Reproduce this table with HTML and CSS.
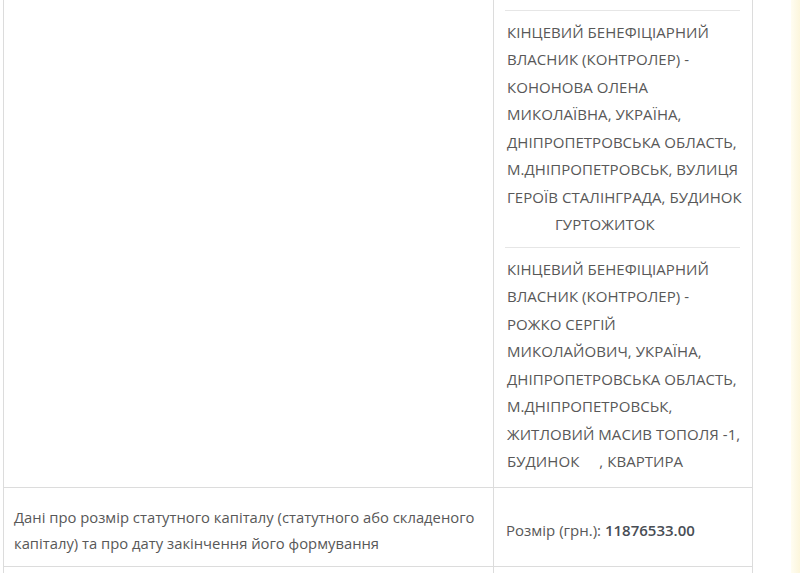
FILE: index.html
```html
<!DOCTYPE html>
<html lang="uk">
<head>
<meta charset="utf-8">
<title>Дані</title>
<link rel="stylesheet" href="styles.css">
</head>
<body>
<div class="page">
  <div class="grid">
    <div class="cell cell-label cell-empty"></div>
    <div class="cell cell-value cell-list">
      <div class="entry">КІНЦЕВИЙ БЕНЕФІЦІАРНИЙ<br>ВЛАСНИК (КОНТРОЛЕР) -<br>КОНОНОВА ОЛЕНА<br>МИКОЛАЇВНА, УКРАЇНА,<br>ДНІПРОПЕТРОВСЬКА ОБЛАСТЬ,<br>М.ДНІПРОПЕТРОВСЬК, ВУЛИЦЯ<br>ГЕРОЇВ СТАЛІНГРАДА, БУДИНОК<br><span class="indent">ГУРТОЖИТОК</span></div>
      <div class="entry">КІНЦЕВИЙ БЕНЕФІЦІАРНИЙ<br>ВЛАСНИК (КОНТРОЛЕР) -<br>РОЖКО СЕРГІЙ<br>МИКОЛАЙОВИЧ, УКРАЇНА,<br>ДНІПРОПЕТРОВСЬКА ОБЛАСТЬ,<br>М.ДНІПРОПЕТРОВСЬК,<br>ЖИТЛОВИЙ МАСИВ ТОПОЛЯ -1,<br>БУДИНОК<span class="gap"></span>, КВАРТИРА</div>
    </div>
    <div class="cell cell-label row-capital">Дані про розмір статутного капіталу (статутного або складеного<br>капіталу) та про дату закінчення його формування</div>
    <div class="cell cell-value row-capital capital">Розмір (грн.): <span class="amount">11876533.00</span></div>
    <div class="cell cell-label row-next"></div>
    <div class="cell cell-value row-next"></div>
  </div>
  <div class="strip"></div>
</div>
</body>
</html>
```

FILE: styles.css
```css
html, body {
  margin: 0;
  padding: 0;
  background: #ffffff;
}

body {
  font-family: "Open Sans", "Noto Sans", sans-serif;
  font-size: 14.8px;
  color: #585858;
}

.page {
  display: flex;
  height: 573px;
  overflow: hidden;
}

.grid {
  margin-left: 3px;
  display: grid;
  grid-template-columns: 490px 259px;
  grid-auto-rows: auto;
  border-left: 1px solid #dcdcdc;
  align-self: flex-start;
}

.cell {
  border-right: 1px solid #dcdcdc;
  border-bottom: 1px solid #dcdcdc;
}

.cell-list {
  padding: 10px 12px 3px 11px;
}

.entry {
  border-top: 1px solid #e6e6e6;
  padding: 7.5px 0 8.5px 2px;
  font-size: 15px;
  letter-spacing: 0.05px;
  line-height: 27.5px;
  white-space: nowrap;
}

.indent {
  padding-left: 48px;
}

.gap {
  display: inline-block;
  width: 20px;
}

.row-capital {
  padding-top: 16px;
  padding-bottom: 10px;
  line-height: 26px;
}

.cell-label.row-capital {
  padding-left: 10px;
  white-space: nowrap;
}

.capital {
  display: flex;
  align-items: center;
  padding-left: 12px;
  font-size: 15px;
  white-space: pre;
}

.amount {
  color: #484d54;
  font-weight: 600;
}

.row-next {
  height: 40px;
  border-bottom: none;
}

.strip {
  margin-left: auto;
  width: 9px;
  height: 573px;
  background: linear-gradient(90deg, #fffdf2, #fcf6dc);
}
```
